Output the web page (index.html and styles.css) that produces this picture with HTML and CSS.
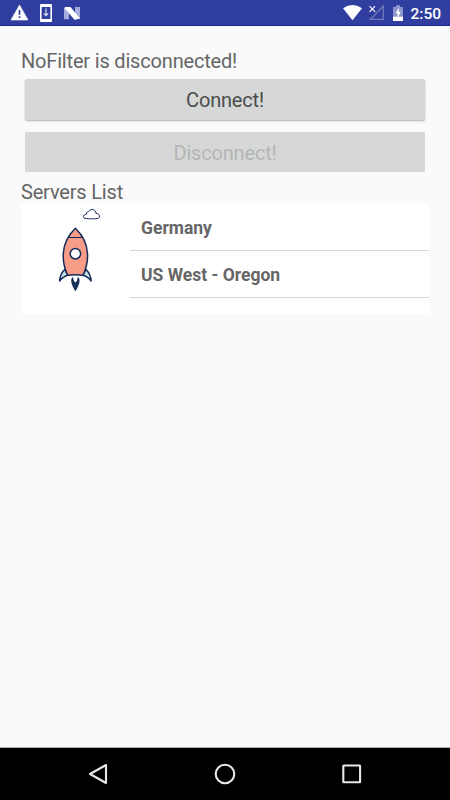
FILE: index.html
```html
<!DOCTYPE html>
<html lang="en">
<head>
  <meta charset="UTF-8" />
  <meta name="viewport" content="width=device-width, initial-scale=1" />
  <title>NoFilter</title>
  <link rel="stylesheet" href="styles.css">
</head>
<body>
  <header class="status-bar">
    <svg class="status-left" width="82" height="26" viewBox="0 0 82 26">
      <path d="M19.5 5L28 20H11Z" fill="#fff" stroke="#fff" stroke-width=".6" stroke-linejoin="round" />
      <path d="M19.5 10v4.8M19.5 16.2v1.8" stroke="#303f9f" stroke-width="1.7" />
      <path d="M41 4h10q1 0 1 1v16q0 1-1 1H41q-1 0-1-1V5q0-1 1-1ZM41.6 7v12h8.8V7Z" fill="#fff" fill-rule="evenodd" />
      <path d="M46 8.5v7M43.8 13.3l2.2 2.3 2.2-2.3" fill="none" stroke="#e1e4f5" stroke-width="1.1" />
      <path d="M64 8l5-1v12.3h-5ZM75 7h5v11.7l-5 .8Z" fill="#a5acdb" />
      <path d="M65 7h5.5L80 18.500l-5.500 1.200L64.500 8Z" fill="#fff" />
    </svg>
    <div class="status-right">
      <svg width="63" height="26" viewBox="342 0 63 26">
        <path d="M343 8.2Q352.5 1.8 362 8.2L352.5 20.2Z" fill="#fff" />
        <path d="M383.3 6.2V19.3H370.5Z" fill="none" stroke="#7079bd" stroke-width="1.3" />
        <path d="M369.5 6.2l5.6 5.6M375.1 6.2l-5.6 5.6" stroke="#fff" stroke-width="1.1" />
        <path d="M393 7h3V5.3h4V7h3v9.500h-10Z" fill="#8d95ce" />
        <path d="M393 16.500h10V21h-10Z" fill="#fff" />
        <path d="M399 8l-3.500 5.300h2V18l3.300-6h-2Z" fill="#fff" />
      </svg>
      <span class="clock">2:50</span>
    </div>
  </header>

  <main class="content">
    <p class="label">NoFilter is disconnected!</p>
    <button class="btn btn-connect">Connect!</button>
    <button class="btn btn-disconnect" disabled>Disconnect!</button>
    <p class="label servers-label">Servers List</p>

    <section class="servers">
      <svg class="rocket" width="109" height="110" viewBox="0 0 109 110">
        <g stroke="#142b5a" stroke-linejoin="round">
          <path d="M65.2 14.6C61.5 14.5 61.5 10.8 65.3 10.3C65.5 8 67 7.3 68 7.3C70.5 4 74.5 5.2 75 9.2C79.5 9.8 79.8 14.3 76 14.6Z" fill="#fff" stroke-width="1" />
          <path d="M67 14.9h8" stroke="#8c98ad" stroke-width="1" />
          <path d="M43.7 65.5Q39 70 38.6 77Q42 72.5 47 71.3Z" fill="#c8e3e6" stroke-width="1.5" />
          <path d="M65 65.5Q69.7 70 70.1 77Q67 72.5 61.8 71.3Z" fill="#c8e3e6" stroke-width="1.5" />
          <path d="M54.4 24.3C37.5 40.5 41.500 60 46.7 71.3Q54.4 70 62 71.3C67.3 60 71.3 40.5 54.4 24.3Z" fill="#f79c86" stroke-width="1.500" />
          <path d="M47.8 33.5h13.200" stroke-width="1" />
          <circle cx="54.4" cy="49.7" r="5.2" fill="#fff" stroke-width="1.5" />
          <path d="M51.5 74Q49.300 77.500 54.400 86.200Q59.500 77.500 57.300 74Q57 78 54.400 79.500Q51.800 78 51.500 74Z" fill="#163656" stroke-width="1.3" />
        </g>
      </svg>
      <ul class="server-list">
        <li>Germany</li>
        <li>US West - Oregon</li>
      </ul>
    </section>
  </main>

  <nav class="nav-bar">
    <svg width="450" height="52" viewBox="0 0 450 52" fill="none" stroke="#e8e8e8" stroke-width="2.1" stroke-linejoin="round">
      <path d="M106 17V35L90 26Z" />
      <circle cx="225" cy="26" r="9.3" />
      <rect x="343.3" y="17.5" width="16.8" height="16.8" rx=".5" />
    </svg>
  </nav>
</body>
</html>
```
FILE: styles.css
```css
* {
  box-sizing: border-box;
}

body {
  margin: 0;
  height: 800px;
  display: flex;
  flex-direction: column;
  background-color: #fafafa;
  color: #666;
  font-family: Roboto, "Liberation Sans", sans-serif;
  overflow: hidden;
}

.status-bar {
  height: 26px;
  display: flex;
  justify-content: space-between;
  background-color: #303f9f;
  border-bottom: 1px solid #1c2787;
  color: #fff;
}

.status-bar svg {
  display: block;
}

.status-right {
  display: flex;
  padding-right: 9px;
}

.clock {
  width: 36px;
  font-size: 15.5px;
  font-weight: 500;
  line-height: 28px;
  text-align: right;
}

.content {
  flex: 1;
  display: flex;
  flex-direction: column;
  padding: 23px 21px 0;
}

.label {
  margin: 0;
  font-size: 20px;
  line-height: 24px;
  letter-spacing: -0.18px;
}

.btn {
  height: 40px;
  margin: 6px 4px 0;
  padding: 0;
  border: none;
  border-radius: 2px;
  background-color: #d6d8d7;
  color: #4b4c4c;
  font-family: inherit;
  font-size: 20px;
  letter-spacing: -0.18px;
}

.btn-connect {
  height: 41px;
  padding-top: 1px;
  box-shadow: 0 1px 2px rgba(0, 0, 0, 0.3);
}

.btn-disconnect {
  margin-top: 12px;
  padding-top: 2px;
  color: #b4b6b5;
}

.servers-label {
  margin-top: 8px;
}

.servers {
  display: flex;
  height: 110px;
  background-color: #fff;
}

.server-list {
  flex: 1;
  margin: 0;
  padding: 0;
  list-style: none;
}

.server-list li {
  height: 47px;
  padding-left: 11px;
  border-bottom: 1px solid #d8d8d8;
  font-size: 17.5px;
  font-weight: bold;
  line-height: 48px;
}

.nav-bar {
  height: 53px;
  border-top: 1px solid #aaa;
  background-color: #000;
}

.nav-bar svg {
  display: block;
}
```
